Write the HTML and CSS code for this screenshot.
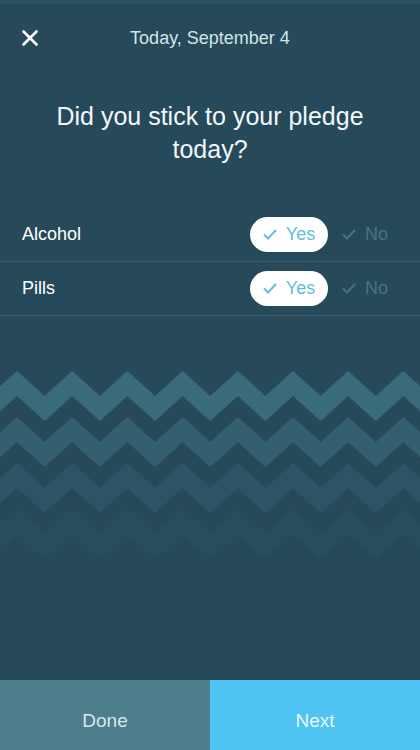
FILE: index.html
```html
<!DOCTYPE html>
<html>
<head>
    <title>Daily Check-in</title>
    <meta charset="UTF-8">
    <link rel="stylesheet" href="styles.css">
</head>
<body>
    <div class="screen">
        <div class="topbar">
            <button class="close" aria-label="Close">
                <svg width="16" height="16" viewBox="0 0 16 16">
                    <path d="M1.5 1.5 L14.5 14.5 M14.5 1.5 L1.5 14.5" stroke="#fff" stroke-width="2.6" stroke-linecap="round"/>
                </svg>
            </button>
            <div class="date">Today, September 4</div>
            <div></div>
        </div>

        <h1 class="question">Did you stick to your pledge today?</h1>

        <div class="pledges">
            <div class="pledge">
                <span class="pledge-name">Alcohol</span>
                <div class="choices">
                    <button class="choice yes selected">
                        <svg width="14" height="11" viewBox="0 0 14 11"><path d="M1 5.5 L5 9.5 L13 1" fill="none" stroke="currentColor" stroke-width="2"/></svg>
                        Yes
                    </button>
                    <button class="choice no">
                        <svg width="14" height="11" viewBox="0 0 14 11"><path d="M1 5.5 L5 9.5 L13 1" fill="none" stroke="currentColor" stroke-width="2"/></svg>
                        No
                    </button>
                </div>
            </div>
            <div class="pledge">
                <span class="pledge-name">Pills</span>
                <div class="choices">
                    <button class="choice yes selected">
                        <svg width="14" height="11" viewBox="0 0 14 11"><path d="M1 5.5 L5 9.5 L13 1" fill="none" stroke="currentColor" stroke-width="2"/></svg>
                        Yes
                    </button>
                    <button class="choice no">
                        <svg width="14" height="11" viewBox="0 0 14 11"><path d="M1 5.5 L5 9.5 L13 1" fill="none" stroke="currentColor" stroke-width="2"/></svg>
                        No
                    </button>
                </div>
            </div>
        </div>

        <svg class="waves" width="420" height="190" viewBox="0 0 420 190">
            <defs>
                <pattern id="zig" x="-10.6" y="0" width="55.2" height="190" patternUnits="userSpaceOnUse">
                    <polygon points="0,25 27.6,0 55.2,25 55.2,50 27.6,25 0,50" fill="#3a6b7b"/>
                    <polygon points="0,71 27.6,46 55.2,71 55.2,96 27.6,71 0,96" fill="#335f6e"/>
                    <polygon points="0,117 27.6,92 55.2,117 55.2,142 27.6,117 0,142" fill="#2c5464"/>
                    <polygon points="0,163 27.6,138 55.2,163 55.2,188 27.6,163 0,188" fill="#284e5e"/>
                </pattern>
            </defs>
            <rect width="420" height="190" fill="url(#zig)"/>
        </svg>

        <div class="actions">
            <button class="action done">Done</button>
            <button class="action next">Next</button>
        </div>
    </div>
</body>
</html>
```

FILE: styles.css
```css
body {
    margin: 0;
    background: #264a5a;
    font-family: "Liberation Sans", Arial, sans-serif;
    color: #fff;
}
button {
    font-family: inherit;
    border: none;
    background: none;
    cursor: pointer;
    padding: 0;
}
.screen {
    height: 100vh;
    display: flex;
    flex-direction: column;
    overflow: hidden;
    border-top: 4px solid #2d5363;
    box-sizing: border-box;
}
.topbar {
    height: 68px;
    display: grid;
    grid-template-columns: 1fr auto 1fr;
    align-items: center;
    padding: 0 22px;
}
.close {
    width: 16px;
    height: 16px;
    display: flex;
}
.date {
    font-size: 18px;
    color: #d3e3ea;
}
.question {
    margin: 28px 30px 0;
    font-size: 25px;
    font-weight: normal;
    line-height: 33px;
    text-align: center;
    color: #f2f8fa;
}
.pledges {
    margin-top: 42px;
}
.pledge {
    height: 53px;
    display: flex;
    align-items: center;
    justify-content: space-between;
    padding: 0 32px 0 22px;
    border-bottom: 1px solid #395f6f;
}
.pledge-name {
    font-size: 18px;
}
.choices {
    display: flex;
    align-items: center;
}
.choice {
    display: flex;
    align-items: center;
    justify-content: center;
    gap: 9px;
    font-size: 18px;
    height: 35px;
}
.choice.yes {
    width: 78px;
    border-radius: 18px;
    color: #62bedb;
}
.choice.selected {
    background: #fff;
}
.choice.no {
    margin-left: 14px;
    color: #4a7282;
}
.waves {
    display: block;
    margin-top: 55px;
}
.actions {
    margin-top: auto;
    display: flex;
    height: 70px;
}
.action {
    flex: 1;
    font-size: 19px;
    padding-top: 12px;
}
.done {
    background: #4e7d8c;
    color: #d8e7ed;
}
.next {
    background: #4fc4f2;
    color: #eaf8fd;
}
```
